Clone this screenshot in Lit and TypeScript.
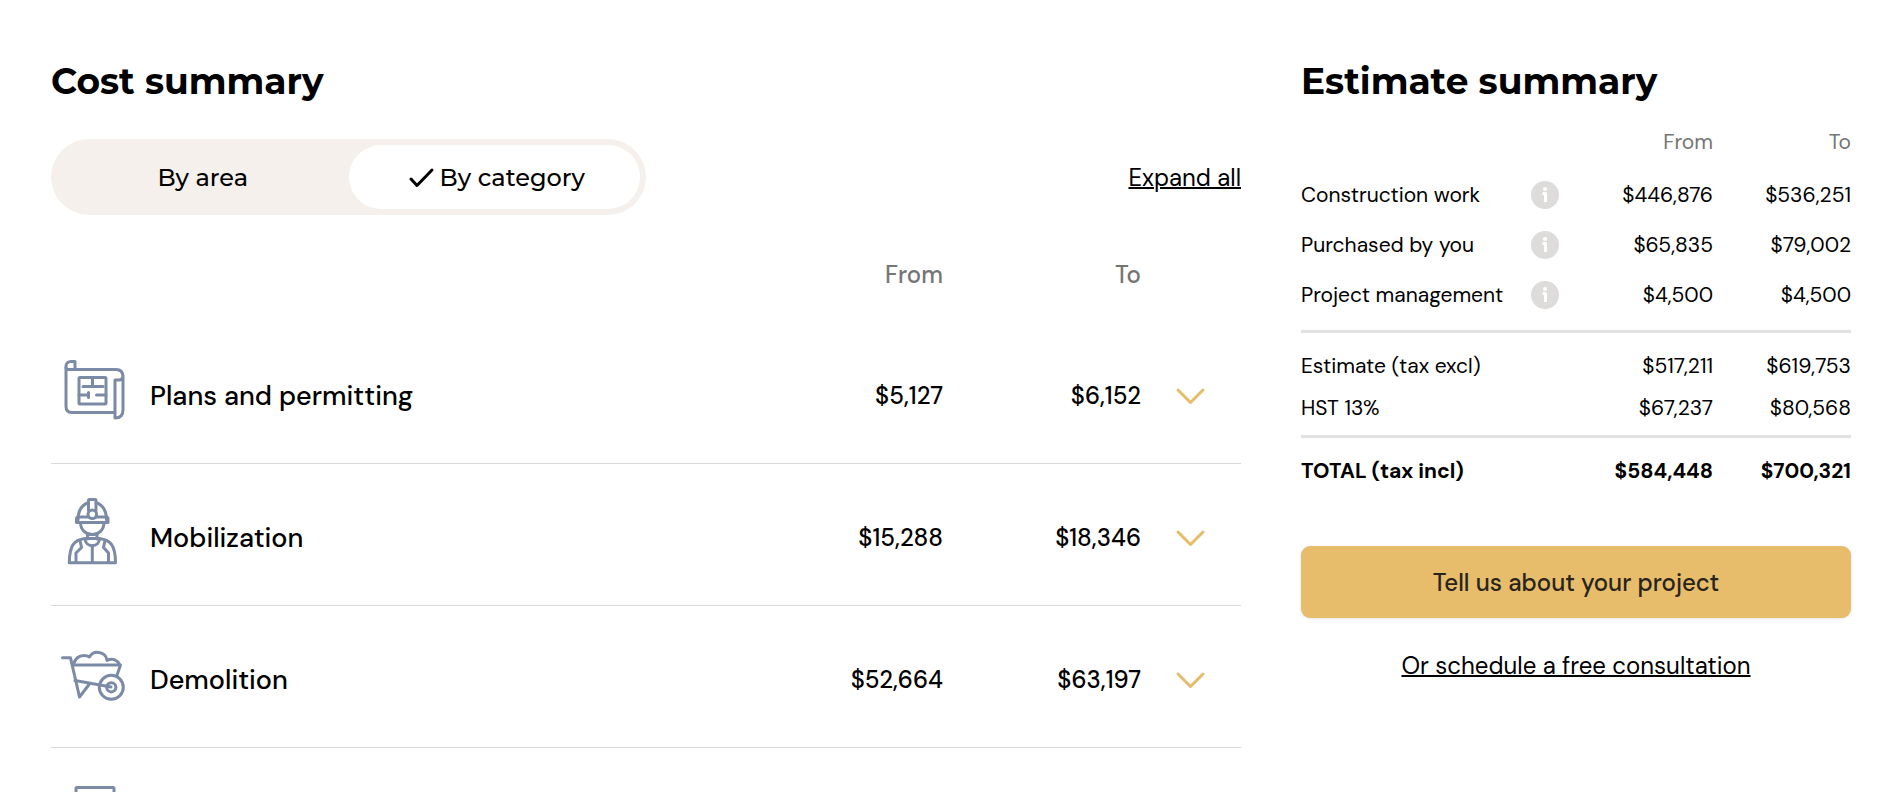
import { LitElement, html, svg, css, nothing, type TemplateResult } from "lit";
import { customElement, property, state } from "lit/decorators.js";

type Range = { from: string; to: string };
type Category = Partial<Range> & { name?: string; icon: TemplateResult };
type Line = Range & { label: string; info?: boolean };

const planIcon = svg`
  <path d="M20 20V12.500H16C13 12.500 11 14.500 11 17V57.500Q11 63.500 17 63.500H59.500"/>
  <path d="M11 18.500C11 21 13 20.500 15 20.500H61Q68 20.500 68 28V61Q68 69 60 69V31H63.500Q68 31 68 26.500"/>
  <rect x="24" y="28.500" width="27" height="26.500" rx="1"/>
  <path d="M37.500 28.500V37.500M28 37.500H48M24 46H33M33.500 43.500V48.500M41.500 46H51"/>`;

const workerIcon = svg`
  <path d="M23 29C23 19 28 13.500 33.500 11.500M41 11.500C46.500 13.500 51.500 19 51.500 29"/>
  <path d="M33.500 19.500V9.500Q33.500 8.500 34.500 8.500H40Q41 8.500 41 9.500V19.500"/>
  <circle cx="37.300" cy="23.300" r="4.300"/>
  <path d="M33.500 26H23Q21.500 26 21.500 28V31.500H53V28Q53 26 51.500 26H41"/>
  <path d="M25.500 31.500C25.500 39 31 43.500 37.300 43.500S49 39 49 31.500"/>
  <path d="M32.500 42.500V48M42 42.500V48M33 47.500H41.500"/>
  <path d="M30 47.500C30 57 44.500 57 44.500 47.500"/>
  <path d="M30 47.500C19 49 14.500 54 14.300 71.800H60.500C60.500 54 55.500 49 44.500 47.500"/>
  <path d="M25 49.500L26.500 56.500L21 62V71.500M50 49.500L48.500 56.500L53.500 62V71.500M37.300 55V71.500"/>`;

const barrowIcon = svg`
  <path d="M7.500 24.800H15.500L24.500 64L34 51.500"/>
  <path d="M18 32H65.500L61.500 43.500"/>
  <path d="M18.500 31.500C20 26 24 22.500 29 22.500C31.500 22.500 33 23 34.500 24C36 21 39 19.200 42 19.200C47.500 19.200 51.500 22.500 52 27.500C58 24.500 62.500 27.500 64.500 31.500"/>
  <path d="M20 47.500L56 54"/>
  <circle cx="56.300" cy="54.300" r="12"/>
  <circle cx="56.300" cy="54.300" r="4.600"/>`;

const sheetIcon = svg`<rect x="21" y="12.500" width="38" height="54" rx="1"/>`;

const categories: Category[] = [
  { name: "Plans and permitting", from: "$5,127", to: "$6,152", icon: planIcon },
  { name: "Mobilization", from: "$15,288", to: "$18,346", icon: workerIcon },
  { name: "Demolition", from: "$52,664", to: "$63,197", icon: barrowIcon },
  { icon: sheetIcon },
];

const lineGroups: Line[][] = [
  [
    { label: "Construction work", from: "$446,876", to: "$536,251", info: true },
    { label: "Purchased by you", from: "$65,835", to: "$79,002", info: true },
    { label: "Project management", from: "$4,500", to: "$4,500", info: true },
  ],
  [
    { label: "Estimate (tax excl)", from: "$517,211", to: "$619,753" },
    { label: "HST 13%", from: "$67,237", to: "$80,568" },
  ],
  [{ label: "TOTAL (tax incl)", from: "$584,448", to: "$700,321" }],
];

const base = css`
  * { box-sizing: border-box; }
  :host { display: block; color: #000; font-family: "DM Sans", "Open Sans", sans-serif; }
  h2 {
    margin: 0;
    font: 700 36px/48px "Montserrat", "Open Sans", sans-serif;
  }
  table { width: 100%; border-spacing: 0; table-layout: fixed; }
  th, td { padding: 0; text-align: left; }
  .amount { text-align: right; }
  button { font: inherit; color: inherit; border: 0; background: none; cursor: pointer; padding: 0; }
  svg { display: block; fill: none; stroke-linecap: round; stroke-linejoin: round; }
  a { color: inherit; }
`;

@customElement("view-toggle")
class ViewToggle extends LitElement {
  static styles = [base, css`
    .track {
      display: flex;
      margin: 0;
      padding: 6px;
      border: 0;
      border-radius: 38px;
      background: #f5f0ec;
    }
    .option {
      position: relative;
      flex: 1;
      display: flex;
      align-items: center;
      justify-content: center;
      gap: 4px;
      height: 64px;
      padding-top: 2px;
      border-radius: 32px;
      font: 500 24px/32px "Montserrat", "Open Sans", sans-serif;
      cursor: pointer;
    }
    .chosen { background: #fff; }
    .radio { position: absolute; inset: 0; margin: 0; appearance: none; border-radius: 32px; cursor: pointer; }
    .tick { stroke: #000; stroke-width: 3; }
  `];
  @state() private chosen = "By category";
  render() {
    return html`<fieldset class="track" aria-label="Group costs">
      ${["By area", "By category"].map((name) => html`
        <label class="option ${name === this.chosen ? "chosen" : ""}">
          <input class="radio" type="radio" name="view" .checked=${name === this.chosen}
            @change=${() => (this.chosen = name)}>
          ${name === this.chosen
            ? svg`<svg class="tick" width="32" height="24" viewBox="0 0 32 24"><path d="M7 13L13 19.500L28 4"/></svg>`
            : nothing}
          <span>${name}</span>
        </label>`)}
    </fieldset>`;
  }
}

@customElement("cost-table")
class CostTable extends LitElement {
  static styles = [base, css`
    .col-amount { width: 198px; }
    .col-toggle { width: 100px; }
    thead th { padding: 42px 0 29px; font-weight: 500; color: #757575; }
    tbody th, tbody td { height: 142px; padding-top: 6px; border-bottom: 1px solid #d9d9d9; font-weight: 500; }
    .name { display: flex; align-items: center; gap: 15px; padding-left: 4px; font-size: 27px; line-height: 36px; }
    .icon { flex: none; stroke: #7c8ba5; stroke-width: 3; }
    .amount { font-size: 24px; line-height: 36px; }
    .expand { display: flex; margin: 0 auto; }
    .chevron { stroke: #e6bc69; stroke-width: 3; }
  `];
  @property({ attribute: false }) rows: Category[] = [];
  render() {
    return html`<table>
      <colgroup><col><col class="col-amount"><col class="col-amount"><col class="col-toggle"></colgroup>
      <thead><tr><th></th><th class="amount">From</th><th class="amount">To</th><th></th></tr></thead>
      <tbody>${this.rows.map((row) => html`<tr>
        <th scope="row"><div class="name">
          <svg class="icon" width="80" height="80" viewBox="0 7 80 80">${row.icon}</svg>
          <span>${row.name}</span>
        </div></th>
        <td class="amount">${row.from}</td>
        <td class="amount">${row.to}</td>
        <td>${row.name ? html`<button class="expand" aria-label="Expand ${row.name}">
          <svg class="chevron" width="32" height="24" viewBox="0 0 32 24"><path d="M3 6L15.500 18.500L28 6"/></svg>
        </button>` : nothing}</td>
      </tr>`)}</tbody>
    </table>`;
  }
}

@customElement("estimate-table")
class EstimateTable extends LitElement {
  static styles = [base, css`
    table { font-size: 21px; line-height: 28px; white-space: nowrap; }
    th { font-weight: 400; }
    .col-info { width: 28px; }
    .col-from { width: 154px; }
    .col-to { width: 138px; }
    thead th { padding: 17px 0 14px; color: #757575; }
    .items th, .items td { padding: 11px 0; }
    .subtotals th, .subtotals td { padding: 7px 0; }
    .items tr:last-child > * { padding-bottom: 21px; border-bottom: 3px solid #e2e2e2; }
    .subtotals tr:first-child > * { padding-top: 19px; }
    .subtotals tr:last-child > * { padding-bottom: 13px; border-bottom: 3px solid #e2e2e2; }
    .total th, .total td { padding: 19px 0 17px; font-weight: 700; }
    .info { display: block; width: 28px; height: 28px; border-radius: 50%; background: #dddcda; }
    .glyph { stroke: #fff; stroke-width: 3; stroke-linecap: butt; }
    .dot { fill: #fff; stroke: none; }
  `];
  @property({ attribute: false }) groups: Line[][] = [];
  render() {
    return html`<table>
      <colgroup><col><col class="col-info"><col class="col-from"><col class="col-to"></colgroup>
      <thead><tr><th></th><th></th><th class="amount">From</th><th class="amount">To</th></tr></thead>
      ${this.groups.map((lines, i) => html`<tbody class=${["items", "subtotals", "total"][i]}>
        ${lines.map((line) => html`<tr>
          <th scope="row">${line.label}</th>
          <td>${line.info ? html`<button class="info" aria-label="About ${line.label}">
            <svg class="glyph" width="28" height="28" viewBox="0 0 28 28">
              <circle class="dot" cx="14" cy="8" r="2"/><path d="M11.500 12.500H14.500V21"/>
            </svg></button>` : nothing}</td>
          <td class="amount">${line.from}</td>
          <td class="amount">${line.to}</td>
        </tr>`)}
      </tbody>`)}
    </table>`;
  }
}

@customElement("app-root")
class AppRoot extends LitElement {
  static styles = [base, css`
    .page {
      display: grid;
      grid-template-columns: minmax(0, 119fr) minmax(0, 55fr);
      align-items: start;
      gap: 60px;
      padding: 57px 47px 0 51px;
      background: #fff;
    }
    .toolbar { display: flex; align-items: center; justify-content: space-between; margin-top: 34px; }
    .toggle { width: 50%; }
    .link {
      font-size: 24px;
      line-height: 32px;
      text-decoration: underline;
      text-decoration-thickness: 2px;
    }
    .expand-all { padding-top: 2px; }
    .estimate { display: flex; flex-direction: column; }
    .lines { margin-top: 6px; }
    .cta {
      margin-top: 44px;
      height: 72px;
      border-radius: 9px;
      background: #e7bd6c;
      color: #29241b;
      font-size: 24px;
      font-weight: 500;
      box-shadow: 0 1px 3px #0000001a;
    }
    .consult { margin-top: 32px; align-self: center; }
  `];
  render() {
    return html`<main class="page">
      <section>
        <h2>Cost summary</h2>
        <div class="toolbar">
          <view-toggle class="toggle"></view-toggle>
          <button class="link expand-all">Expand all</button>
        </div>
        <cost-table .rows=${categories}></cost-table>
      </section>
      <section class="estimate">
        <h2>Estimate summary</h2>
        <estimate-table class="lines" .groups=${lineGroups}></estimate-table>
        <button class="cta">Tell us about your project</button>
        <a class="link consult" href="#consultation">Or schedule a free consultation</a>
      </section>
    </main>`;
  }
}
